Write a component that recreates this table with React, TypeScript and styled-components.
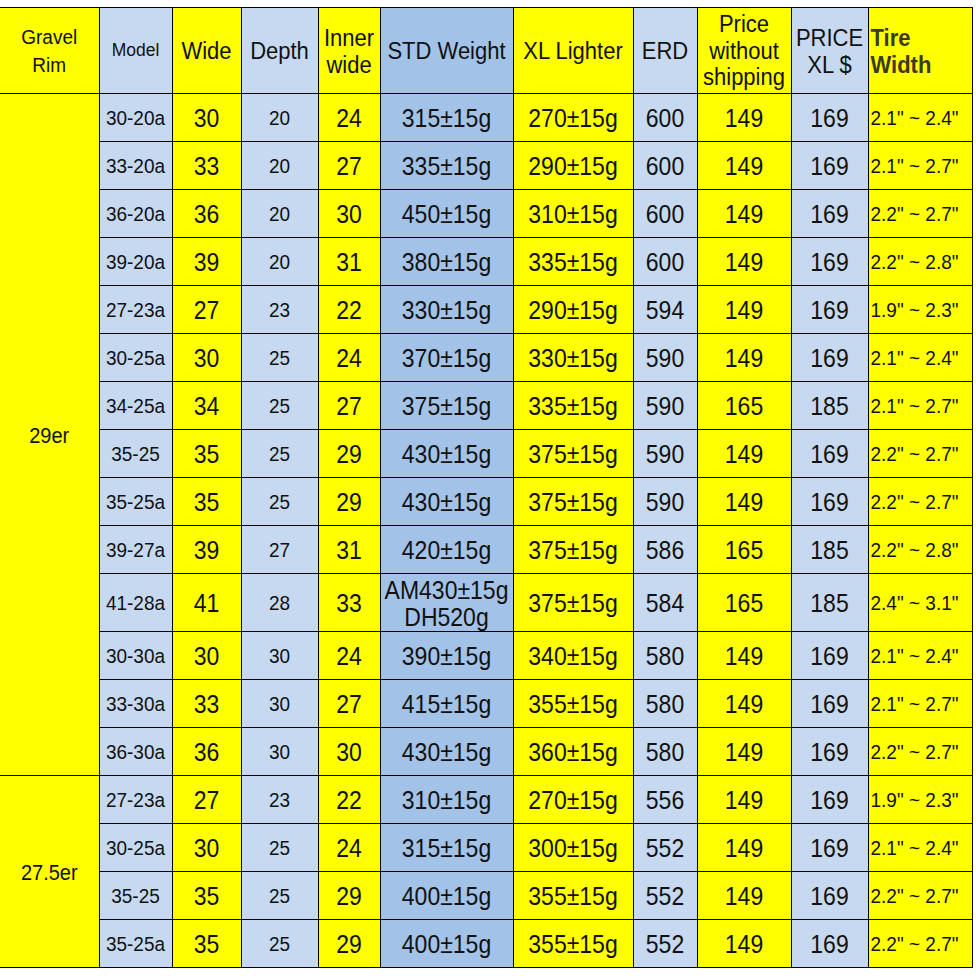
import React from "react";
import styled, { createGlobalStyle } from "styled-components";

const Global = createGlobalStyle`
  html, body { margin: 0; padding: 0; background: #ffffff; }
  body { font-family: "Liberation Sans", Arial, sans-serif; }
`;

const YELLOW = "#ffff00";
const LIGHT = "#c6d9f0";
const STD = "#a3c2e8";

const Page = styled.div`
  padding-top: 7px;
  width: 976px;
`;

const Table = styled.table`
  border-collapse: collapse;
  table-layout: fixed;
  width: 972px;
  font-family: "Liberation Sans", Arial, sans-serif;
  color: #111;
`;

const HeadRow = styled.tr`
  height: 86px;
`;

const Row = styled.tr<{ $tall?: boolean }>`
  height: ${(p) => (p.$tall ? 58 : 48)}px;
`;

const Cell = styled.td<{ $bg: string; $size: number; $align?: string; $bold?: boolean; $color?: string; $first?: boolean }>`
  background: ${(p) => p.$bg};
  font-size: ${(p) => p.$size}px;
  font-weight: ${(p) => (p.$bold ? 700 : 400)};
  color: ${(p) => p.$color || "#111"};
  text-align: ${(p) => p.$align || "center"};
  padding: ${(p) => (p.$align === "left" ? "2px 0 0 2px" : "2px 0 0 0")};
  border: 1px solid #000;
  border-left: ${(p) => (p.$first ? "none" : "1px solid #000")};
  line-height: 1.08;
  vertical-align: middle;
  white-space: nowrap;
  overflow: hidden;
`;

const HeadCell = styled(Cell).attrs({ as: "th" })<{ $lh?: number }>`
  line-height: ${(p) => p.$lh || 25}px;
  padding-top: 0;
`;

const Text = styled.span`
  display: inline-block;
  transform: scaleY(1.09);
`;

type Col = { w: number; bg: string; size: number; hsize: number; head: React.ReactNode; align?: string; bold?: boolean; hcolor?: string; halign?: string; lh?: number };

const cols: Col[] = [
  { w: 99, bg: YELLOW, size: 20, hsize: 19, head: <>Gravel<br />Rim</> },
  { w: 73, bg: LIGHT, size: 19, hsize: 17.5, head: "Model" },
  { w: 69, bg: YELLOW, size: 23, hsize: 22, head: "Wide" },
  { w: 77, bg: LIGHT, size: 19, hsize: 22, head: "Depth" },
  { w: 62, bg: YELLOW, size: 23, hsize: 22, head: <>Inner<br />wide</> },
  { w: 133, bg: STD, size: 23, hsize: 22, head: "STD Weight" },
  { w: 120, bg: YELLOW, size: 23, hsize: 22, head: "XL Lighter" },
  { w: 64, bg: LIGHT, size: 23, hsize: 22, head: "ERD" },
  { w: 94, bg: YELLOW, size: 23, hsize: 22, head: <>Price<br />without<br />shipping</>, lh: 24 },
  { w: 77, bg: LIGHT, size: 23, hsize: 22, head: <>PRICE<br />XL $</> },
  { w: 104, bg: YELLOW, size: 19, hsize: 22, head: <>Tire<br />Width</>, align: "left", bold: true, hcolor: "#3b3b1c", halign: "left" },
];

type R = [string, string, string, string, string, string, string, string, string, string];

const group29: R[] = [
  ["30-20a", "30", "20", "24", "315±15g", "270±15g", "600", "149", "169", '2.1" ~ 2.4"'],
  ["33-20a", "33", "20", "27", "335±15g", "290±15g", "600", "149", "169", '2.1" ~ 2.7"'],
  ["36-20a", "36", "20", "30", "450±15g", "310±15g", "600", "149", "169", '2.2" ~ 2.7"'],
  ["39-20a", "39", "20", "31", "380±15g", "335±15g", "600", "149", "169", '2.2" ~ 2.8"'],
  ["27-23a", "27", "23", "22", "330±15g", "290±15g", "594", "149", "169", '1.9" ~ 2.3"'],
  ["30-25a", "30", "25", "24", "370±15g", "330±15g", "590", "149", "169", '2.1" ~ 2.4"'],
  ["34-25a", "34", "25", "27", "375±15g", "335±15g", "590", "165", "185", '2.1" ~ 2.7"'],
  ["35-25", "35", "25", "29", "430±15g", "375±15g", "590", "149", "169", '2.2" ~ 2.7"'],
  ["35-25a", "35", "25", "29", "430±15g", "375±15g", "590", "149", "169", '2.2" ~ 2.7"'],
  ["39-27a", "39", "27", "31", "420±15g", "375±15g", "586", "165", "185", '2.2" ~ 2.8"'],
  ["41-28a", "41", "28", "33", "AM430±15g|DH520g", "375±15g", "584", "165", "185", '2.4" ~ 3.1"'],
  ["30-30a", "30", "30", "24", "390±15g", "340±15g", "580", "149", "169", '2.1" ~ 2.4"'],
  ["33-30a", "33", "30", "27", "415±15g", "355±15g", "580", "149", "169", '2.1" ~ 2.7"'],
  ["36-30a", "36", "30", "30", "430±15g", "360±15g", "580", "149", "169", '2.2" ~ 2.7"'],
];

const group275: R[] = [
  ["27-23a", "27", "23", "22", "310±15g", "270±15g", "556", "149", "169", '1.9" ~ 2.3"'],
  ["30-25a", "30", "25", "24", "315±15g", "300±15g", "552", "149", "169", '2.1" ~ 2.4"'],
  ["35-25", "35", "25", "29", "400±15g", "355±15g", "552", "149", "169", '2.2" ~ 2.7"'],
  ["35-25a", "35", "25", "29", "400±15g", "355±15g", "552", "149", "169", '2.2" ~ 2.7"'],
];

const groups = [
  { name: "29er", rows: group29 },
  { name: "27.5er", rows: group275 },
];

function renderValue(v: string) {
  if (v.includes("|")) {
    const [a, b] = v.split("|");
    return (
      <Text>
        {a}
        <br />
        {b}
      </Text>
    );
  }
  return <Text>{v}</Text>;
}

export default function App() {
  return (
    <Page>
      <Global />
      <Table>
        <colgroup>
          {cols.map((c, i) => (
            <col key={i} style={{ width: c.w }} />
          ))}
        </colgroup>
        <thead>
          <HeadRow>
            {cols.map((c, i) => (
              <HeadCell
                key={i}
                $bg={c.bg}
                $size={c.hsize}
                $bold={c.bold}
                $color={c.hcolor}
                $align={c.halign}
                $first={i === 0}
                $lh={c.lh}
              >
                <Text>{c.head}</Text>
              </HeadCell>
            ))}
          </HeadRow>
        </thead>
        <tbody>
          {groups.map((g) =>
            g.rows.map((r, ri) => (
              <Row key={g.name + ri} $tall={r[4].includes("|")}>
                {ri === 0 && (
                  <Cell $bg={YELLOW} $size={cols[0].size} rowSpan={g.rows.length} $first>
                    <Text>{g.name}</Text>
                  </Cell>
                )}
                {r.map((v, ci) => {
                  const c = cols[ci + 1];
                  return (
                    <Cell key={ci} $bg={c.bg} $size={c.size} $align={c.align}>
                      {renderValue(v)}
                    </Cell>
                  );
                })}
              </Row>
            ))
          )}
        </tbody>
      </Table>
    </Page>
  );
}
